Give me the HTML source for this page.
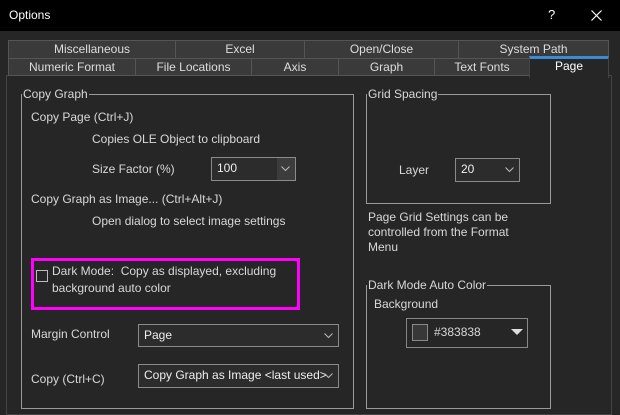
<!DOCTYPE html><html><head><style>
*{margin:0;padding:0;box-sizing:border-box}
body{width:620px;height:412px;background:#262626;font-family:"Liberation Sans",sans-serif;font-size:12px;color:#d8d8d8;position:relative;overflow:hidden}
.a{position:absolute;white-space:nowrap}
.t{position:absolute;background:#3a3a3a;border:1px solid #555;text-align:center;line-height:16px;color:#ddd}
.g{position:absolute;border:1px solid #9a9a9a}
.gl{position:absolute;background:#262626;padding:0 1px;left:0;top:-8px;line-height:14px}
.cb{position:absolute;border:1px solid #8a8a8a;background:#2c2c2c;line-height:21px;padding-left:5px;color:#eee}
.ch{position:absolute;right:5px;top:8px}
</style></head><body>
<div class="a" style="left:0;top:0;width:620px;height:31px;background:#000"></div>
<div class="a" style="left:9px;top:8px;color:#fff;font-size:12px">Options</div>
<div class="a" style="left:548px;top:7px;color:#fff;font-size:13px">?</div>
<svg class="a" style="left:591px;top:10px" width="11" height="11"><path d="M0.5 0.5L10.5 10.5M10.5 0.5L0.5 10.5" stroke="#fff" stroke-width="1.2"/></svg>
<div class="a" style="left:6px;top:75px;width:606px;height:340px;border:1px solid #444;background:#262626"></div>
<div class="t" style="left:8px;top:40px;width:168px;height:19px">Miscellaneous</div>
<div class="t" style="left:175px;top:40px;width:130px;height:19px">Excel</div>
<div class="t" style="left:304px;top:40px;width:155px;height:19px">Open/Close</div>
<div class="t" style="left:458px;top:40px;width:151px;height:19px">System Path</div>
<div class="t" style="left:8px;top:58px;width:128px;height:18px">Numeric Format</div>
<div class="t" style="left:135px;top:58px;width:117px;height:18px">File Locations</div>
<div class="t" style="left:251px;top:58px;width:88px;height:18px">Axis</div>
<div class="t" style="left:338px;top:58px;width:97px;height:18px">Graph</div>
<div class="t" style="left:434px;top:58px;width:96px;height:18px">Text Fonts</div>
<div class="t" style="left:529px;top:56px;width:80px;height:22px;background:#262626;border-color:#444;border-bottom:none;border-top:3px solid #3a8ad6;line-height:14px;color:#fff">Page</div>
<div class="g" style="left:21px;top:94px;width:333px;height:315px"><div class="gl">Copy Graph</div></div>
<div class="a" style="left:31px;top:110px">Copy Page (Ctrl+J)</div>
<div class="a" style="left:92px;top:132px">Copies OLE Object to clipboard</div>
<div class="a" style="left:92px;top:162px">Size Factor (%)</div>
<div class="cb" style="left:211px;top:157px;width:85px;height:24px">100<div style="position:absolute;right:0;top:0;width:18px;height:22px;background:#3c3c3c"></div><svg class="ch" width="9" height="6"><path d="M0.5 0.5L4.5 4.5L8.5 0.5" stroke="#bbb" fill="none"/></svg></div>
<div class="a" style="left:31px;top:192px">Copy Graph as Image... (Ctrl+Alt+J)</div>
<div class="a" style="left:92px;top:214px">Open dialog to select image settings</div>
<div class="a" style="left:31px;top:258px;width:269px;height:52px;border:3px solid #ff00ff"></div>
<div class="a" style="left:36px;top:270px;width:12px;height:12px;border:1px solid #bbb"></div>
<div class="a" style="left:52px;top:263px;line-height:17px">Dark Mode:&nbsp; Copy as displayed, excluding<br>background auto color</div>
<div class="a" style="left:31px;top:327px">Margin Control</div>
<div class="cb" style="left:138px;top:324px;width:201px;height:23px">Page<svg class="ch" width="9" height="6"><path d="M0.5 0.5L4.5 4.5L8.5 0.5" stroke="#bbb" fill="none"/></svg></div>
<div class="a" style="left:31px;top:372px">Copy (Ctrl+C)</div>
<div class="cb" style="left:138px;top:364px;width:201px;height:24px">Copy Graph as Image &lt;last used&gt;<svg class="ch" width="9" height="6"><path d="M0.5 0.5L4.5 4.5L8.5 0.5" stroke="#bbb" fill="none"/></svg></div>
<div class="g" style="left:366px;top:94px;width:185px;height:110px"><div class="gl">Grid Spacing</div></div>
<div class="a" style="left:399px;top:163px">Layer</div>
<div class="cb" style="left:455px;top:158px;width:65px;height:24px">20<svg class="ch" width="9" height="6"><path d="M0.5 0.5L4.5 4.5L8.5 0.5" stroke="#bbb" fill="none"/></svg></div>
<div class="a" style="left:368px;top:210px;line-height:15px">Page Grid Settings can be<br>controlled from the Format<br>Menu</div>
<div class="g" style="left:366px;top:285px;width:185px;height:124px"><div class="gl">Dark Mode Auto Color</div></div>
<div class="a" style="left:374px;top:297px">Background</div>
<div class="a" style="left:406px;top:318px;width:122px;height:30px;border:1px solid #888"></div>
<div class="a" style="left:412px;top:324px;width:16px;height:17px;border:1px solid #888;background:#383838"></div>
<div class="a" style="left:434px;top:325px">#383838</div>
<div class="a" style="left:511px;top:329px;width:0;height:0;border-left:6px solid transparent;border-right:6px solid transparent;border-top:6px solid #ddd"></div>
</body></html>
